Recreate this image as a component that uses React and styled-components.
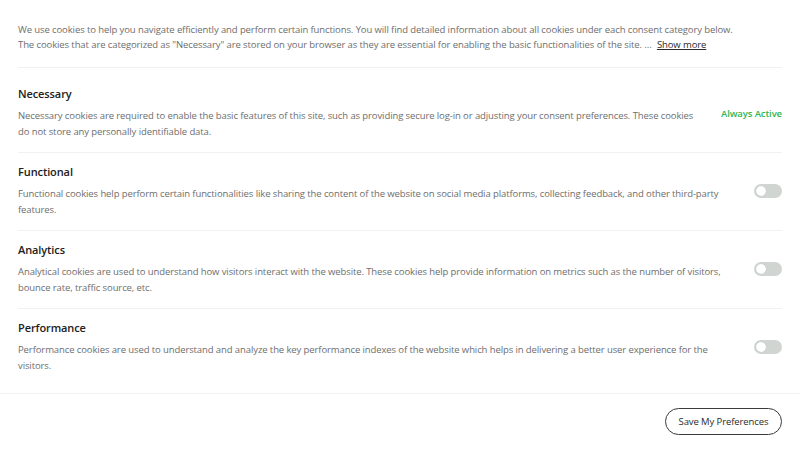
import styled, { createGlobalStyle } from "styled-components";

const GlobalStyle = createGlobalStyle`
  body {
    margin: 0;
    background: #ffffff;
    font-family: "Open Sans", "Liberation Sans", sans-serif;
    letter-spacing: -0.1px;
  }
`;

const categories = [
  {
    id: "necessary",
    title: "Necessary",
    text: "Necessary cookies are required to enable the basic features of this site, such as providing secure log-in or adjusting your consent preferences. These cookies do not store any personally identifiable data.",
    alwaysActive: true,
  },
  {
    id: "functional",
    title: "Functional",
    text: "Functional cookies help perform certain functionalities like sharing the content of the website on social media platforms, collecting feedback, and other third-party features.",
  },
  {
    id: "analytics",
    title: "Analytics",
    text: "Analytical cookies are used to understand how visitors interact with the website. These cookies help provide information on metrics such as the number of visitors, bounce rate, traffic source, etc.",
  },
  {
    id: "performance",
    title: "Performance",
    text: "Performance cookies are used to understand and analyze the key performance indexes of the website which helps in delivering a better user experience for the visitors.",
  },
];

const App = () => {
  return (
    <Page>
      <GlobalStyle />
      <Body>
        <Intro>
          <p>
            We use cookies to help you navigate efficiently and perform certain
            functions. You will find detailed information about all cookies
            under each consent category below.
          </p>
          <p>
            The cookies that are categorized as "Necessary" are stored on your
            browser as they are essential for enabling the basic
            functionalities of the site. ... <ShowMore>Show more</ShowMore>
          </p>
        </Intro>
        <List>
          {categories.map((item) => (
            <Category key={item.id}>
              <Info>
                <Title>{item.title}</Title>
                <Desc>{item.text}</Desc>
              </Info>
              {item.alwaysActive ? (
                <AlwaysActive>Always Active</AlwaysActive>
              ) : (
                <Toggle aria-label={`Enable ${item.title}`} />
              )}
            </Category>
          ))}
        </List>
      </Body>
      <Footer>
        <SaveButton>Save My Preferences</SaveButton>
      </Footer>
    </Page>
  );
};

export default App;

const Page = styled.div`
  width: 800px;
  height: 450px;
  display: flex;
  flex-direction: column;
  background: #ffffff;
`;

const Body = styled.div`
  padding: 22px 18px 7px;
`;

const Intro = styled.div`
  padding-bottom: 15px;
  border-bottom: 1px solid #f1f1f1;
  font-size: 9.5px;
  line-height: 15px;
  color: #6e6e6e;

  p {
    margin: 0;
  }
`;

const ShowMore = styled.button`
  margin-left: 3px;
  padding: 0;
  border: none;
  background: none;
  font-family: inherit;
  font-size: 9.5px;
  font-weight: 500;
  letter-spacing: -0.1px;
  color: #2b2b2b;
  text-decoration: underline;
  cursor: pointer;
`;

const List = styled.div`
  padding-top: 7px;
`;

const Category = styled.div`
  display: flex;
  align-items: center;
  gap: 16px;
  padding: 11px 0 12px;
  border-bottom: 1px solid #f1f1f1;

  &:last-child {
    border-bottom: none;
  }
`;

const Info = styled.div`
  flex: 1;
`;

const Title = styled.div`
  font-size: 11px;
  line-height: 16px;
  font-weight: 600;
  color: #212121;
  margin-bottom: 6px;
`;

const Desc = styled.p`
  margin: 0;
  font-size: 9.5px;
  line-height: 16px;
  color: #6e6e6e;
`;

const AlwaysActive = styled.span`
  font-size: 9.5px;
  font-weight: 600;
  color: #2fb552;
  white-space: nowrap;
`;

const Toggle = styled.button`
  position: relative;
  width: 28px;
  height: 14px;
  padding: 0;
  border: none;
  border-radius: 7px;
  background: #d0d5d2;
  flex-shrink: 0;
  cursor: pointer;

  &::before {
    content: "";
    position: absolute;
    top: 2px;
    left: 2px;
    width: 10px;
    height: 10px;
    border-radius: 50%;
    background: #ffffff;
    box-shadow: 0 0 1px rgba(0, 0, 0, 0.2);
  }
`;

const Footer = styled.div`
  margin-top: auto;
  display: flex;
  justify-content: flex-end;
  padding: 14px 18px 16px;
  border-top: 1px solid #f1f1f1;
`;

const SaveButton = styled.button`
  width: 117px;
  height: 27px;
  border: 1px solid #3a3a3a;
  border-radius: 14px;
  background: #ffffff;
  font-family: inherit;
  font-size: 9.5px;
  font-weight: 500;
  letter-spacing: -0.1px;
  color: #2b2b2b;
  cursor: pointer;
`;
